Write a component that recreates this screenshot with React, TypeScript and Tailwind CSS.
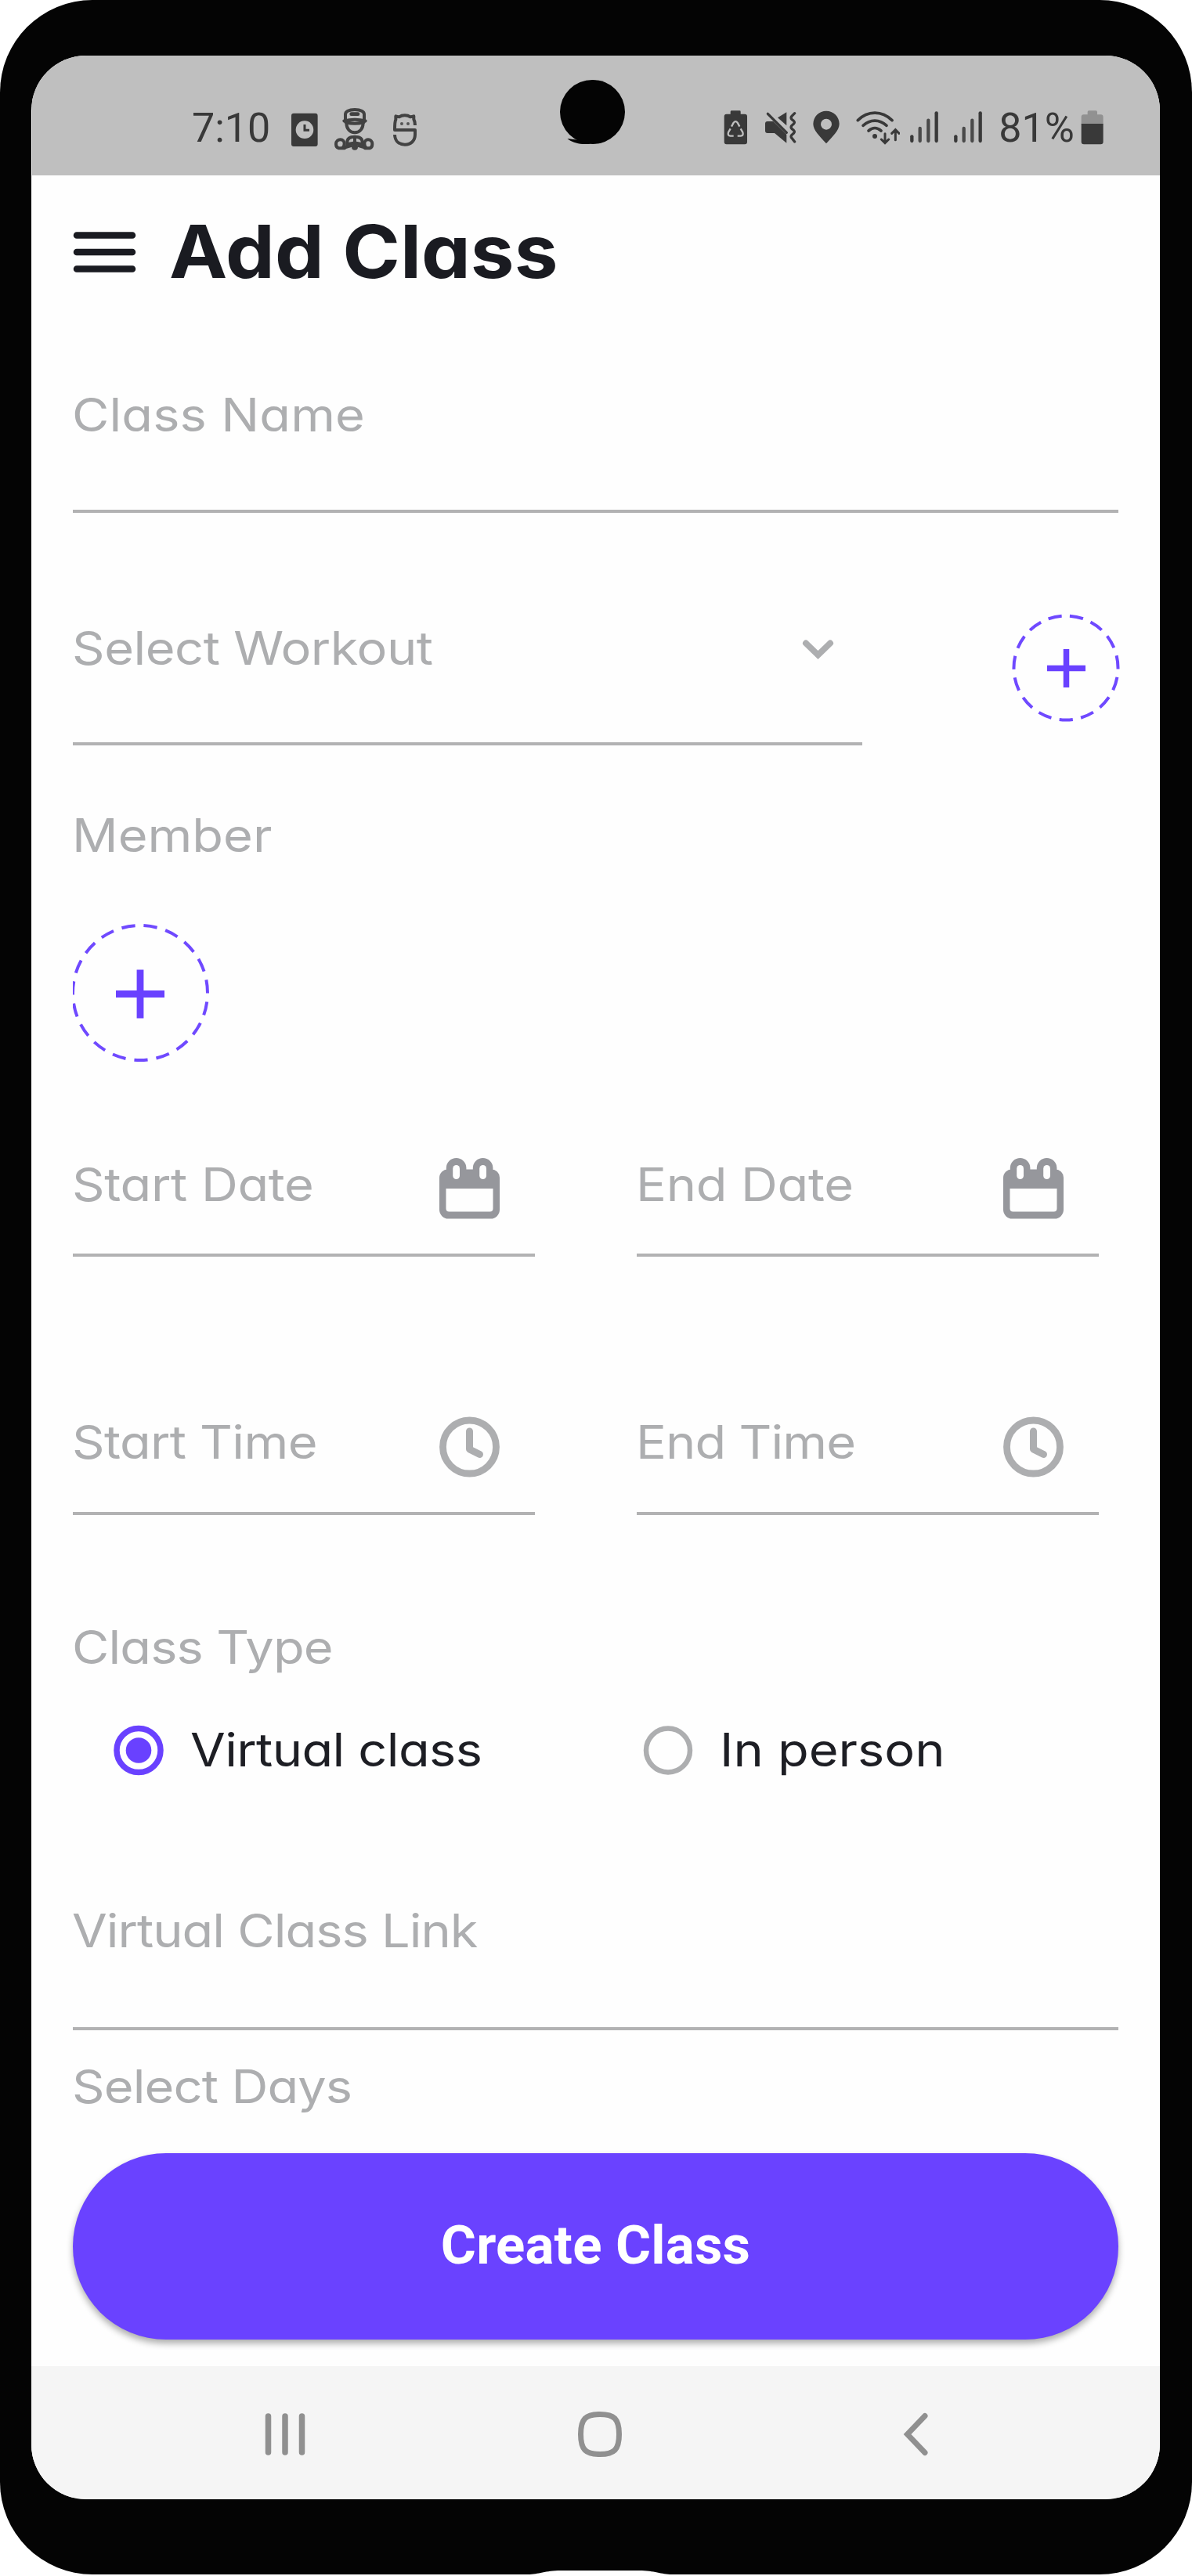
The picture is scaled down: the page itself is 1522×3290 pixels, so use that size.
import type { ReactNode } from "react";
import clsx from "clsx";

const INK = "#393939";
const BAR = "#bfbfbf";

/* ---------- Status bar icons ---------- */

function ClockAppIcon() {
  return (
    <svg className="ml-[25px] h-[56.7px] w-[38.3px] shrink-0" viewBox="60 32 115 170" fill="none">
      <rect x="66" y="58" width="101" height="127" rx="9" fill={INK} />
      <circle cx="117" cy="121" r="34" fill={BAR} />
      <path d="M117 101v22h18" stroke={INK} strokeWidth="9" />
    </svg>
  );
}

function OfficerIcon() {
  return (
    <svg className="ml-[16.7px] h-[56.7px] w-[55px] shrink-0" viewBox="225 32 165 170" fill="none" stroke="#424242" strokeWidth="12" strokeLinejoin="round" strokeLinecap="round">
      <path d="M273 82V62c0-10 12-18 36-18s36 8 36 18v20" />
      <path d="M296 61h25" strokeWidth="14" />
      <path d="M268 87c26-6 56-6 82 0M274 92c22 7 48 7 70 0" />
      <path d="M277 94c0 24 14 38 32 38s32-14 32-38" />
      <path d="M280 182v-14c0-14 12-20 29-20s29 6 29 20v14" />
      <path d="M309 150v28M284 176l20-4M334 176l-20-4" />
      <circle cx="309" cy="187" r="6" />
      <path d="M270 192h-22c-8-2-11-8-11-16 0-12 8-17 17-17s15 7 15 16c0 9-4 13-8 16" />
      <path d="M348 192h18c7-2 10-8 10-16 0-12-8-17-16-17s-14 7-14 16c0 9 4 13 8 16" />
      <path d="M274 188l20-6M344 188l-20-6" />
    </svg>
  );
}

function CatSIcon() {
  return (
    <svg className="ml-[20px] h-[56.7px] w-[33.3px] shrink-0" viewBox="450 32 100 170" fill="none" stroke="#424242" strokeWidth="12" strokeLinejoin="round">
      <path d="M540 104c0-11-2-18-5-23V69l-13 3c-12-8-31-8-43 0l-13-3v13c-4 7-4 20-4 40h78v18c0 23-16 38-39 38s-38-14-39-38" />
      <circle cx="489" cy="98" r="6" fill="#555" stroke="none" />
      <circle cx="513" cy="98" r="6" fill="#555" stroke="none" />
    </svg>
  );
}

function BatterySaverIcon() {
  return (
    <svg className="h-[48px] w-[30.7px] shrink-0" viewBox="44 30 92 144" fill="none">
      <path d="M70 38q0-4 4-4h31q4 0 4 4v9h16q9 0 9 9v98q0 9-9 9H55q-9 0-9-9V56q0-9 9-9h15z" fill={INK} />
      <g stroke={BAR} strokeWidth="7">
        <path d="M74 95l8-15q8-9 15 0l8 15" />
        <path d="M70 103l-8 14q-4 13 8 14h12" />
        <path d="M109 103l8 14q4 13-8 14H97" />
      </g>
    </svg>
  );
}

function MuteVibrateIcon() {
  return (
    <svg className="ml-[21.3px] h-[48px] w-[41.3px] shrink-0" viewBox="200 30 124 144" fill="none">
      <path d="M285 40v51l-34-30z" fill={INK} />
      <path d="M212 75h22l51 50v33l-46-38h-27q-9 0-9-9V84q0-9 9-9z" fill={INK} />
      <path d="M213 46l72 72" stroke={INK} strokeWidth="10" strokeLinecap="round" />
      <path d="M316 44l-11 11q-6 7 1 13l6 5q6 6 0 12l-7 6q-6 7 1 13l6 5q6 6 0 12l-7 6q-6 7 1 13l10 13" stroke={INK} strokeWidth="10" strokeLinecap="round" />
    </svg>
  );
}

function PinIcon() {
  return (
    <svg className="ml-[20px] h-[48px] w-[36px] shrink-0" viewBox="384 30 108 144">
      <path d="M438 160c-24-27-50-50-50-75a50 50 0 01100 0c0 25-26 48-50 75z" fill={INK} />
      <circle cx="438" cy="86" r="21" fill={BAR} />
    </svg>
  );
}

function WifiIcon() {
  return (
    <svg className="ml-[19.3px] h-[48px] w-[56.7px] shrink-0" viewBox="550 30 170 144" fill="none" stroke={INK} strokeWidth="11" strokeLinecap="round">
      <path d="M557 71c38-38 92-38 131 0" />
      <path d="M577 91c28-25 62-25 90 0" />
      <path d="M598 111c17-14 31-14 48 0" />
      <circle cx="622" cy="132" r="9" fill={INK} stroke="none" />
      <path d="M661 122v35M647 144l14 14 14-14M701 146v-36M687 121l14-14 14 14" strokeWidth="9" />
    </svg>
  );
}

function SignalIcon({ className }: { className: string }) {
  return (
    <svg className={clsx("h-[48px] w-[38px] shrink-0", className)} viewBox="756 30 114 144" stroke={INK} strokeWidth="13" strokeLinecap="round">
      <path d="M766 133v17" />
      <path d="M797 102v48M829 71v79" stroke="#4a4a4a" />
      <path d="M860 43v107" />
    </svg>
  );
}

function BatteryIcon() {
  return (
    <svg className="ml-[7.8px] h-[48px] w-[29.3px] shrink-0" viewBox="1411 30 88 144">
      <path d="M1413 86V58q0-9 9-9h15V39q0-5 5-5h27q5 0 5 5v10h14q9 0 9 9v28z" fill="#919191" />
      <path d="M1413 84h84v69q0 10-10 10h-64q-10 0-10-10z" fill={INK} />
    </svg>
  );
}

function StatusBar() {
  return (
    <div className="ml-px flex h-[153px] shrink-0 items-center justify-between bg-[#bfbfbf] pt-[33px] pr-[72px] pl-[204px] font-['Roboto',sans-serif] text-[52px] leading-[52px] text-[#393939]">
      <div className="flex items-center">
        <span>7:10</span>
        <ClockAppIcon />
        <OfficerIcon />
        <CatSIcon />
      </div>
      <div className="flex items-center">
        <BatterySaverIcon />
        <MuteVibrateIcon />
        <PinIcon />
        <WifiIcon />
        <SignalIcon className="ml-[12px]" />
        <SignalIcon className="mr-[20px] ml-[18px]" />
        <span>81%</span>
        <BatteryIcon />
      </div>
    </div>
  );
}

/* ---------- Form pieces ---------- */

function Label({ children, className }: { children: ReactNode; className?: string }) {
  return (
    <div className={clsx("-ml-px h-[70px] origin-left scale-x-[1.1] text-[59px] leading-[70px] whitespace-nowrap", className)}>
      {children}
    </div>
  );
}

function CalendarIcon() {
  return (
    <svg className="mt-[1px] h-[78px] w-[77px] shrink-0" viewBox="0 0 77 78">
      <g fill="#96979c">
        <rect x="8.8" y="0" width="25.6" height="38" rx="12.8" />
        <rect x="42.8" y="0" width="25.6" height="38" rx="12.8" />
        <path
          fillRule="evenodd"
          d="M11 14.5h55.5a10.5 10.5 0 0110.5 10.500V66a11.500 11.500 0 01-11.500 11.500h-54A11.500 11.500 0 010 66V25a10.500 10.500 0 0111-10.500zM8.500 39v25.500a4 4 0 004 4h52a4 4 0 004-4V39z"
        />
      </g>
      <rect x="17.200" y="9" width="8.800" height="18" rx="4.400" fill="#fefefe" />
      <rect x="51.200" y="9" width="8.800" height="18" rx="4.400" fill="#fefefe" />
    </svg>
  );
}

function ClockIcon() {
  return (
    <svg className="mt-[2px] h-[78px] w-[77px] shrink-0" viewBox="0 0 77 78" fill="none" stroke="#adaeb0" strokeLinecap="round" strokeLinejoin="round">
      <circle cx="38.500" cy="39" r="34" strokeWidth="8.800" />
      <path d="M38.500 19V42l13 6.500" strokeWidth="9" />
    </svg>
  );
}

function PickerField({ label, spacing, icon, className }: { label: string; spacing: string; icon: ReactNode; className: string }) {
  return (
    <div className={clsx("flex w-[590px] items-start justify-between border-b-4 border-[#b2b2b3] pr-[45px]", className)}>
      <Label className={spacing}>{label}</Label>
      {icon}
    </div>
  );
}

function Radio({ checked }: { checked?: boolean }) {
  return (
    <svg className="size-[65px] shrink-0" viewBox="0 0 65 65" fill="none">
      <circle cx="32" cy="32.500" r="28" stroke={checked ? "#6941ff" : "#adaeb0"} strokeWidth={checked ? 7.5 : 6.5} />
      {checked && <circle cx="32" cy="32.500" r="16.300" fill="#6941ff" />}
    </svg>
  );
}

/* ---------- Screen ---------- */

export default function App() {
  return (
    <div className="relative h-[3290px] w-[1522px] bg-white">
      <div className="h-[3288px] rounded-[118px] bg-[#040404] pt-[71px] pr-[41px] pl-[40px]">
        <div className="flex h-[3121px] flex-col overflow-hidden rounded-[70px] bg-[#fefefe] font-['Inter',sans-serif] text-[#adaeb0] [font-feature-settings:'cv11']">
          <StatusBar />

          <main className="flex flex-col px-[53px]">
            <header className="flex h-[194px] items-center text-[#1a1b21]">
              <svg className="h-[60px] w-[82px]" viewBox="0 0 82 60" stroke="currentColor" strokeWidth="8.500" strokeLinecap="round">
                <path d="M5 9.500h71M5 31h71M5 52.500h71" />
              </svg>
              <h1 className="ml-[41px] origin-left scale-x-[1.06] text-[94px] leading-none font-bold">Add Class</h1>
            </header>

            <div className="h-[237px] border-b-4 border-[#b2b2b3] pt-[77px]">
              <Label className="tracking-[0.1px]">Class Name</Label>
            </div>

            <div className="flex h-[297px] justify-between">
              <div className="flex w-[1008px] items-start justify-between border-b-4 border-[#b2b2b3] pt-[138px] pr-[34px]">
                <Label className="tracking-[-0.44px]">Select Workout</Label>
                <svg className="mt-[22px] h-[30px] w-[44px]" viewBox="0 0 44 30" fill="none" stroke="#adaeb0" strokeWidth="8" strokeLinecap="round">
                  <path d="M6 6.500L21.500 21.500 37 6.500" />
                </svg>
              </div>
              <svg className="mt-[129px] -mr-[2px] size-[138px]" viewBox="0 0 138 138" fill="none" stroke="#6f49ff">
                <circle cx="69" cy="69" r="66.500" strokeWidth="4" pathLength="418" strokeDasharray="17.400 10.467" strokeDashoffset="-5" transform="rotate(-90 69 69)" />
                <path d="M69.500 45v49M45 69.500h49" stroke="#6941ff" strokeWidth="7.500" />
              </svg>
            </div>

            <Label className="mt-[80px]">Member</Label>
            <svg className="mt-[78px] h-[176px] w-[174px]" viewBox="0 0 174 176" fill="none" stroke="#6f49ff">
              <circle cx="86" cy="88" r="86" strokeWidth="4" pathLength="540" strokeDasharray="17.400 11.021" strokeDashoffset="-4.500" transform="rotate(-90 86 88)" />
              <path d="M86 58.500v62M55 89.500h62" stroke="#6941ff" strokeWidth="8.800" />
            </svg>

            <div className="flex gap-[130px]">
              <PickerField label="Start Date" spacing="tracking-[-0.3px]" icon={<CalendarIcon />} className="h-[249px] pt-[122px]" />
              <PickerField label="End Date" spacing="tracking-[-0.3px]" icon={<CalendarIcon />} className="h-[249px] pt-[122px]" />
            </div>
            <div className="flex gap-[130px]">
              <PickerField label="Start Time" spacing="tracking-[-0.58px]" icon={<ClockIcon />} className="h-[330px] pt-[202px]" />
              <PickerField label="End Time" spacing="tracking-[-0.86px]" icon={<ClockIcon />} className="h-[330px] pt-[202px]" />
            </div>

            <Label className="mt-[134px] tracking-[-0.8px]">Class Type</Label>
            <div className="mt-[61px] flex pl-[52px] text-[#1d1e24]">
              <div className="flex w-[676px] items-center gap-[34px]">
                <Radio checked />
                <Label className="tracking-[-0.56px]">Virtual class</Label>
              </div>
              <div className="flex items-center gap-[34px]">
                <Radio />
                <Label>In person</Label>
              </div>
            </div>

            <div className="h-[323px] border-b-4 border-[#b2b2b3] pt-[161px]">
              <Label className="tracking-[-0.9px]">Virtual Class Link</Label>
            </div>
            <Label className="mt-[37px] tracking-[-0.8px]">Select Days</Label>

            <button className="mt-[50px] h-[238px] rounded-full bg-[#6a42ff] pb-[3px] font-['Roboto',sans-serif] text-[69px] font-bold tracking-[0.2px] text-white shadow-[0_5px_9px_rgba(0,0,0,0.32)]">
              Create Class
            </button>
          </main>

          <nav className="mt-[34px] h-[168px] bg-[#f5f5f5] text-[#909090]">
            <div className="flex items-start pt-[57px] pl-[298px]">
              <svg className="h-[60px] w-[52px]" viewBox="0 0 52 60" stroke="currentColor" strokeWidth="7.500" strokeLinecap="round">
                <path d="M4.500 7v46M26 7v46M47.500 7v46" />
              </svg>
              <svg className="ml-[347px] h-[60px] w-[58px]" viewBox="0 0 58 60" fill="none" stroke="currentColor" strokeWidth="7">
                <path d="M29 4.500C47 4.500 53.500 10 53.500 30S47 55.500 29 55.500 4.500 50 4.500 30 11 4.500 29 4.500z" />
              </svg>
              <svg className="ml-[357px] h-[60px] w-[34px]" viewBox="0 0 34 60" fill="none" stroke="currentColor" strokeWidth="7" strokeLinecap="round">
                <path d="M29 6.500L6.500 30 29 53.500" />
              </svg>
            </div>
          </nav>
        </div>
      </div>

      {/* Front camera cut-out */}
      <svg className="absolute top-[102px] left-[715px] h-[82px] w-[83px]" viewBox="0 0 83 82" fill="#040404">
        <ellipse cx="41.500" cy="41" rx="41.500" ry="41" />
        <path d="M9.500 75l12 1.500L40 82H29C21 81.500 14 79 9.500 75z" />
      </svg>

      {/* Speaker recess along the bottom edge */}
      <svg className="absolute bottom-0 left-[674px] h-[7px] w-[184px]" viewBox="0 0 184 7" fill="#fff">
        <path d="M0 5c14 0 22-5 42-5h100c20 0 28 5 42 5v2H0z" />
      </svg>
    </div>
  );
}
